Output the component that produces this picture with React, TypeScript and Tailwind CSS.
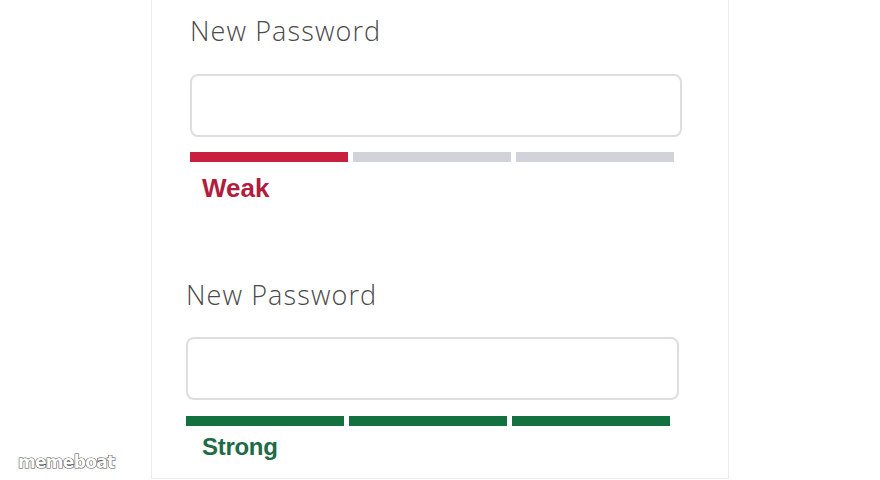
import React from "react";

function Bars({ colors }: { colors: string[] }) {
  return (
    <div className="flex gap-[5px] w-[484px] h-[10px]">
      {colors.map((c, i) => (
        <div key={i} className="flex-1 h-full" style={{ backgroundColor: c }} />
      ))}
    </div>
  );
}

export default function App() {
  return (
    <div className="relative w-[880px] h-[480px] bg-white overflow-hidden">
      <div className="ml-[151px] w-[578px] h-[479px] border-x border-b border-[#ececec] flex flex-col">
        {/* Section 1 */}
        <div className="ml-[38px] flex flex-col">
          <div className="mt-[15px] h-[32px] leading-[32px] text-[27px] font-light tracking-[1.1px] text-[#4a4a4a] font-['Open_Sans',sans-serif]">
            New Password
          </div>
          <div className="mt-[27px] w-[492px] h-[63px] rounded-[8px] border-2 border-[#dedede] bg-white" />
          <div className="mt-[15px]">
            <Bars colors={["#c8203c", "#d1d3db", "#d1d3db"]} />
          </div>
          <div className="ml-[12px] mt-[12px] h-[28px] leading-[28px] text-[26px] font-bold text-[#b11d3d] font-['Liberation_Sans',Arial,sans-serif]">
            Weak
          </div>
        </div>
        {/* Section 2 */}
        <div className="ml-[34px] flex flex-col">
          <div className="mt-[77px] h-[32px] leading-[32px] text-[27px] font-light tracking-[1.1px] text-[#4a4a4a] font-['Open_Sans',sans-serif]">
            New Password
          </div>
          <div className="mt-[26px] w-[493px] h-[63px] rounded-[8px] border-2 border-[#dedede] bg-white" />
          <div className="mt-[16px]">
            <Bars colors={["#13703f", "#13703f", "#13703f"]} />
          </div>
          <div className="ml-[16px] mt-[7px] h-[28px] leading-[28px] text-[24px] font-bold text-[#1e6b45] font-['Liberation_Sans',Arial,sans-serif] tracking-[-0.3px]">
            Strong
          </div>
        </div>
      </div>
      <div className="absolute left-[18px] top-[450px] text-[17px] font-bold text-white font-['DejaVu_Sans',sans-serif] tracking-[-0.7px] [-webkit-text-stroke:1.2px_#555] [paint-order:stroke_fill]">
        memeboat
      </div>
    </div>
  );
}
